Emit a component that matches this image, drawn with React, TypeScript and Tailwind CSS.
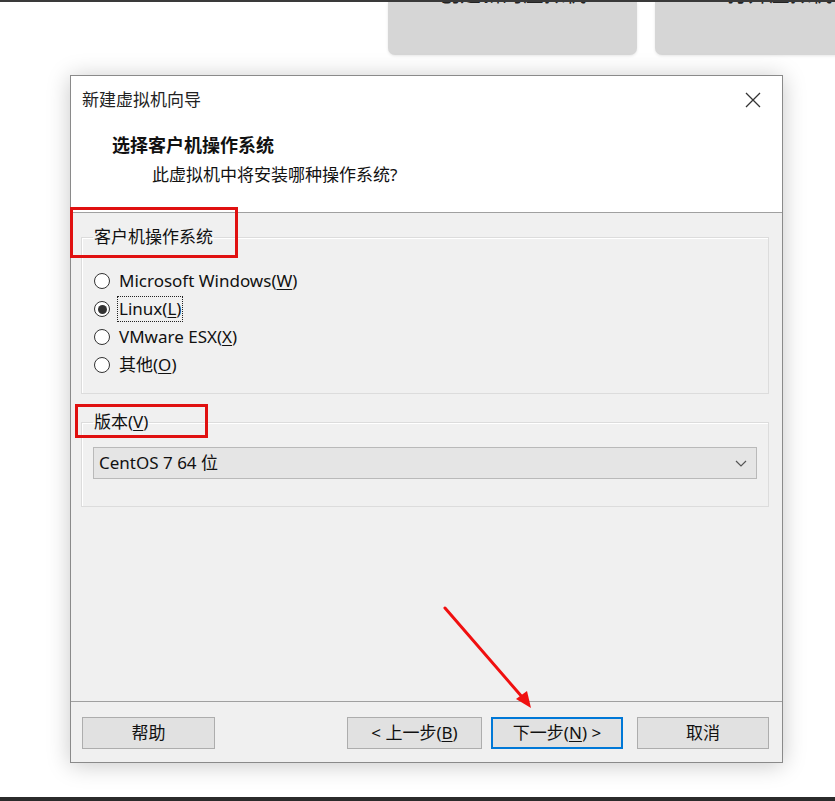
import React from 'react';

const font = { fontFamily: '"Noto Sans", "Noto Sans CJK SC", sans-serif' };

const Radio = ({ label, u, checked, focus }: { label: string; u: string; checked?: boolean; focus?: boolean }) => {
  const [pre, post] = label.split('|');
  return (
    <div className="flex items-center h-[28px]">
      <span className="w-[16px] h-[16px] rounded-full border border-[#333] bg-white flex items-center justify-center ml-[12px] mr-[8px]">
        {checked && <span className="w-[9px] h-[9px] rounded-full bg-[#333]" />}
      </span>
      <span className={`text-[17px] leading-[24px] text-[#111] px-px ${focus ? 'outline outline-1 outline-dotted outline-[#222]' : ''}`}>
        {pre}(<span className="underline underline-offset-2">{u}</span>){post}
      </span>
    </div>
  );
};

const Btn = ({ children, w, primary }: { children: React.ReactNode; w: string; primary?: boolean }) => (
  <div
    className={`${w} h-[32px] flex items-center justify-center text-[17px] text-[#111] bg-[#e1e1e1] ${
      primary ? 'border-2 border-[#0078d7]' : 'border border-[#adadad]'
    }`}
  >
    {children}
  </div>
);

export default function App() {
  return (
    <div className="relative w-[835px] h-[801px] bg-white overflow-hidden flex flex-col" style={font}>
      {/* top bar + cards (labels run past the top edge, as in the capture) */}
      <div className="h-[2px] bg-[#3a3a3a]" />
      <div className="flex gap-[18px] pl-[388px] h-[53px]">
        <div className="shrink-0 w-[249px] h-full bg-[#d6d6d6] rounded-b-[7px] overflow-hidden shadow-[0_1px_3px_rgba(0,0,0,0.1)]">
          <div className="-mt-[21px] text-center text-[21px] leading-[24px] text-[#222]">创建新的虚拟机</div>
        </div>
        <div className="shrink-0 w-[249px] h-full bg-[#d6d6d6] rounded-b-[7px] overflow-hidden shadow-[0_1px_3px_rgba(0,0,0,0.1)]">
          <div className="-mt-[21px] text-center text-[21px] leading-[24px] text-[#222]">打开虚拟机</div>
        </div>
      </div>

      {/* dialog */}
      <div className="ml-[70px] mt-[20px] w-[713px] h-[688px] border border-[#8a8a8a] flex flex-col shadow-[0_2px_22px_rgba(0,0,0,0.22)]">
        <div className="h-[137px] bg-white border-b border-[#a0a0a0] flex flex-col">
          <div className="flex items-center justify-between pt-[12px] pl-[11px] pr-[18px]">
            <span className="text-[17px] leading-[24px] text-[#222]">新建虚拟机向导</span>
            <svg width="18" height="18" viewBox="0 0 18 18" className="mr-[2px]">
              <path d="M2 2 L16 16 M16 2 L2 16" stroke="#333" strokeWidth="1.3" fill="none" />
            </svg>
          </div>
          <div className="pl-[41px] mt-[21px] text-[18px] leading-[24px] font-bold text-[#111]">选择客户机操作系统</div>
          <div className="pl-[81px] mt-[6px] text-[17px] leading-[24px] text-[#111]">此虚拟机中将安装哪种操作系统?</div>
        </div>

        <div className="flex-1 bg-[#f0f0f0] pl-[10px] pr-[13px] pt-[12px] flex flex-col">
          <fieldset className="border border-[#dcdcdc] shadow-[inset_1px_1px_0_#fff] pb-[14px]">
            <legend className="ml-[11px] px-px text-[17px] leading-[24px] text-[#111]">客户机操作系统</legend>
            <div className="mt-[18px] flex flex-col">
              <Radio label="Microsoft Windows|" u="W" />
              <Radio label="Linux|" u="L" checked focus />
              <Radio label="VMware ESX|" u="X" />
              <Radio label="其他|" u="O" />
            </div>
          </fieldset>

          <fieldset className="mt-[16px] border border-[#dcdcdc] shadow-[inset_1px_1px_0_#fff] px-[11px] pb-[27px]">
            <legend className="px-px text-[17px] leading-[24px] text-[#111]">
              版本(<span className="underline underline-offset-2">V</span>)
            </legend>
            <div className="mt-[13px] h-[32px] bg-[#e5e5e5] border border-[#b9b9b9] flex items-center justify-between pl-[5px] pr-[9px]">
              <span className="text-[17px] text-[#111]">CentOS 7 64 位</span>
              <svg width="12" height="7" viewBox="0 0 12 7">
                <path d="M1 1 L6 6 L11 1" stroke="#555" strokeWidth="1.2" fill="none" />
              </svg>
            </div>
          </fieldset>
        </div>

        <div className="h-[61px] bg-[#f0f0f0] border-t border-[#a0a0a0] flex items-start pt-[15px] pl-[11px] pr-[13px]">
          <Btn w="w-[133px]">帮助</Btn>
          <div className="flex-1" />
          <Btn w="w-[135px]">
            &lt; 上一步(<span className="underline underline-offset-2">B</span>)
          </Btn>
          <div className="w-[9px]" />
          <Btn w="w-[132px]" primary>
            下一步(<span className="underline underline-offset-2">N</span>) &gt;
          </Btn>
          <div className="w-[14px]" />
          <Btn w="w-[132px]">取消</Btn>
        </div>
      </div>

      <div className="mt-auto h-[4px] bg-[#2b2b2b]" />

      {/* annotations */}
      <div className="absolute left-[70px] top-[207px] w-[168px] h-[51px] border-[3px] border-[#e01010]" />
      <div className="absolute left-[75px] top-[404px] w-[133px] h-[34px] border-[3px] border-[#e01010]" />
      <svg className="absolute left-0 top-0" width="835" height="801" viewBox="0 0 835 801">
        <line x1="445" y1="608" x2="523" y2="698" stroke="#f01010" strokeWidth="3" strokeLinecap="round" />
        <path d="M531 708 L516 699 L527 691 Z" fill="#f01010" />
      </svg>
    </div>
  );
}
